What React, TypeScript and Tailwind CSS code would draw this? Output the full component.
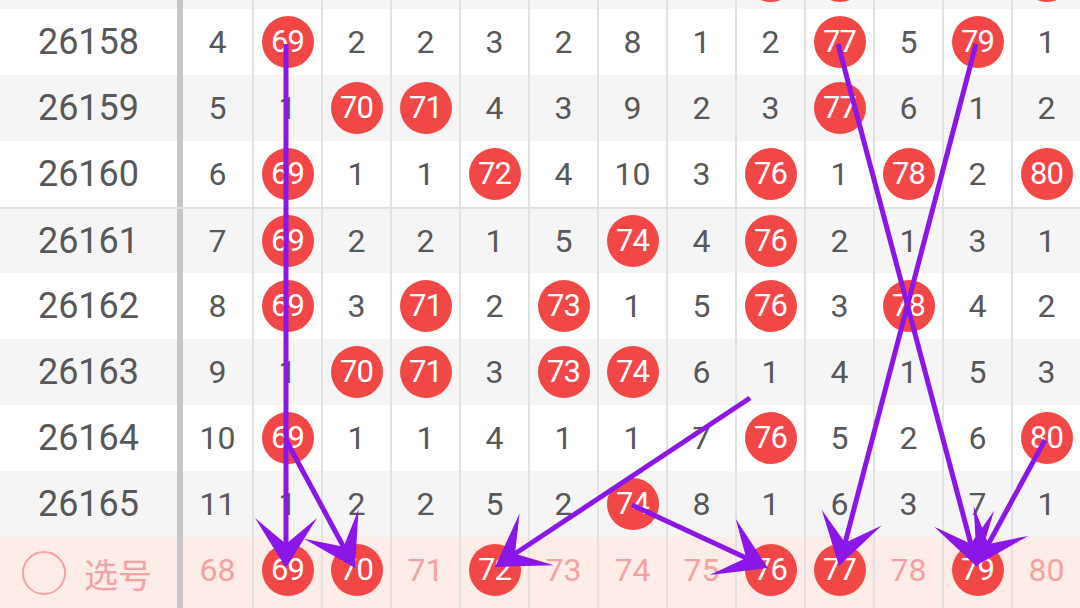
import React from 'react'

const COLS = [68, 69, 70, 71, 72, 73, 74, 75, 76, 77, 78, 79, 80]

// 0 = drawn number (red ball showing the column number), -1 = scrolled out of view
const ROWS: { issue: string; cells: number[] }[] = [
  { issue: '', cells: [-1, -1, -1, -1, -1, -1, -1, -1, 0, 0, -1, -1, 0] },
  { issue: '26158', cells: [4, 0, 2, 2, 3, 2, 8, 1, 2, 0, 5, 0, 1] },
  { issue: '26159', cells: [5, 1, 0, 0, 4, 3, 9, 2, 3, 0, 6, 1, 2] },
  { issue: '26160', cells: [6, 0, 1, 1, 0, 4, 10, 3, 0, 1, 0, 2, 0] },
  { issue: '26161', cells: [7, 0, 2, 2, 1, 5, 0, 4, 0, 2, 1, 3, 1] },
  { issue: '26162', cells: [8, 0, 3, 0, 2, 0, 1, 5, 0, 3, 0, 4, 2] },
  { issue: '26163', cells: [9, 1, 0, 0, 3, 0, 0, 6, 1, 4, 1, 5, 3] },
  { issue: '26164', cells: [10, 0, 1, 1, 4, 1, 1, 7, 0, 5, 2, 6, 0] },
  { issue: '26165', cells: [11, 1, 2, 2, 5, 2, 0, 8, 1, 6, 3, 7, 1] },
]

const PICKED = [69, 70, 72, 76, 77, 79]

// hand-drawn arrows, screen coords
const ARROWS: [number, number, number, number][] = [
  [286, 44, 286, 568],
  [286, 440, 355, 568],
  [750, 398, 495, 567],
  [632, 505, 768, 568],
  [976, 44, 839, 566],
  [838, 44, 977, 567],
  [1045, 440, 977, 565],
]

const numFont = { fontFamily: 'Roboto, "Noto Sans", sans-serif' }

function Ball({ n }: { n?: number }) {
  return (
    <div className="w-[52px] h-[52px] rounded-full bg-[#f24747] flex items-center justify-center text-white text-[31px] tracking-[-1px]">
      {n}
    </div>
  )
}

function Arrow({ x1, y1, x2, y2 }: { x1: number; y1: number; x2: number; y2: number }) {
  const len = Math.hypot(x2 - x1, y2 - y1)
  const dx = (x2 - x1) / len
  const dy = (y2 - y1) / len
  const nx = -dy
  const ny = dx
  const back = 50
  const side = 31
  const notch = 24
  const pts = [
    [x2, y2],
    [x2 - dx * back + nx * side, y2 - dy * back + ny * side],
    [x2 - dx * notch, y2 - dy * notch],
    [x2 - dx * back - nx * side, y2 - dy * back - ny * side],
  ]
  return (
    <g>
      <line x1={x1} y1={y1} x2={x2 - dx * notch} y2={y2 - dy * notch} stroke="#8a17e8" strokeWidth={5} />
      <polygon points={pts.map((p) => p.join(',')).join(' ')} fill="#8a17e8" />
    </g>
  )
}

export default function App() {
  return (
    <div className="relative w-[1080px] h-[608px] overflow-hidden bg-white" style={numFont}>
      <div className="-mt-[57px]">
        {ROWS.map((row, ri) => (
          <div
            key={ri}
            className={`flex h-[66px] ${ri % 2 === 0 ? 'bg-[#f5f5f5]' : 'bg-white'} ${
              row.issue === '26161' ? 'border-t-2 border-[#e2e2e2]' : ''
            }`}
          >
            <div className="w-[177px] flex items-center justify-center text-[36px] text-[#585858]">
              {row.issue}
            </div>
            <div className="w-[6px] bg-[#c6c6c6]" />
            {row.cells.map((v, ci) => (
              <div
                key={ci}
                className={`w-[69px] flex items-center justify-center text-[32px] text-[#585858] ${
                  ci > 0 ? 'border-l-2 border-[#e2e2e2]' : ''
                }`}
              >
                {v === 0 ? <Ball n={row.issue ? COLS[ci] : undefined} /> : v > 0 ? v : null}
              </div>
            ))}
          </div>
        ))}

        {/* selection row */}
        <div className="flex h-[72px] bg-[#fdece8]">
          <div className="w-[177px] flex items-center pl-[22px] gap-[18px] text-[#f3a3a3]">
            <div className="w-[44px] h-[44px] rounded-full border-2 border-[#f3a3a3]" />
            <span className="text-[34px]" style={{ fontFamily: '"Noto Sans CJK SC", sans-serif' }}>
              选号
            </span>
          </div>
          <div className="w-[6px] bg-[#c6c6c6]" />
          {COLS.map((n, ci) => (
            <div
              key={n}
              className={`w-[69px] flex items-start pt-[7px] justify-center text-[32px] text-[#f3a3a3] ${
                ci > 0 ? 'border-l-2 border-[#e2e2e2]' : ''
              }`}
            >
              {PICKED.includes(n) ? <Ball n={n} /> : <span className="leading-[52px]">{n}</span>}
            </div>
          ))}
        </div>
      </div>

      <svg className="absolute inset-0 pointer-events-none" width={1080} height={608}>
        {ARROWS.map(([x1, y1, x2, y2], i) => (
          <Arrow key={i} x1={x1} y1={y1} x2={x2} y2={y2} />
        ))}
      </svg>
    </div>
  )
}
